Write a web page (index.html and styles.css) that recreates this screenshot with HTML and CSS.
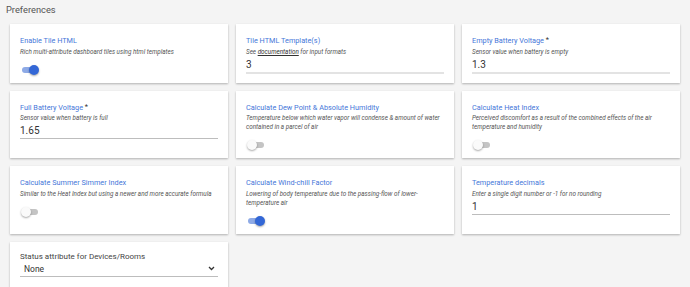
FILE: index.html
```html
<!DOCTYPE html>
<html lang="en">
<head>
    <meta charset="UTF-8">
    <title>Preferences</title>
    <link rel="stylesheet" href="styles.css">
</head>
<body>
    <h2 class="page-title">Preferences</h2>

    <div class="grid">
        <div class="card">
            <div class="label">Enable Tile HTML</div>
            <div class="desc">Rich multi-attribute dashboard tiles using html templates</div>
            <div class="switch on"><span class="track"></span><span class="knob"></span></div>
        </div>
        <div class="card">
            <div class="label">Tile HTML Template(s)</div>
            <div class="desc">See <a href="#">documentation</a> for input formats</div>
            <div class="field thick">3</div>
        </div>
        <div class="card">
            <div class="label">Empty Battery Voltage <span class="req">*</span></div>
            <div class="desc">Sensor value when battery is empty</div>
            <div class="field thick">1.3</div>
        </div>

        <div class="card">
            <div class="label">Full Battery Voltage <span class="req">*</span></div>
            <div class="desc">Sensor value when battery is full</div>
            <div class="field">1.65</div>
        </div>
        <div class="card">
            <div class="label">Calculate Dew Point &amp; Absolute Humidity</div>
            <div class="desc">Temperature below which water vapor will condense &amp; amount of water contained in a parcel of air</div>
            <div class="switch"><span class="track"></span><span class="knob"></span></div>
        </div>
        <div class="card">
            <div class="label">Calculate Heat Index</div>
            <div class="desc">Perceived discomfort as a result of the combined effects of the air temperature and humidity</div>
            <div class="switch"><span class="track"></span><span class="knob"></span></div>
        </div>

        <div class="card">
            <div class="label">Calculate Summer Simmer Index</div>
            <div class="desc">Similar to the Heat Index but using a newer and more accurate formula</div>
            <div class="switch"><span class="track"></span><span class="knob"></span></div>
        </div>
        <div class="card">
            <div class="label">Calculate Wind-chill Factor</div>
            <div class="desc">Lowering of body temperature due to the passing-flow of lower-temperature air</div>
            <div class="switch on"><span class="track"></span><span class="knob"></span></div>
        </div>
        <div class="card">
            <div class="label">Temperature decimals</div>
            <div class="desc">Enter a single digit number or -1 for no rounding</div>
            <div class="field">1</div>
        </div>

        <div class="card select-card">
            <div class="select-label">Status attribute for Devices/Rooms</div>
            <div class="select">
                <span>None</span>
                <svg width="7" height="5" viewBox="0 0 7 5"><path d="M1 1l2.5 2.5L6 1" fill="none" stroke="#333" stroke-width="1.3"/></svg>
            </div>
        </div>
    </div>
</body>
</html>
```

FILE: styles.css
```css
body {
    margin: 0;
    padding: 0;
    font-family: Roboto, "Liberation Sans", sans-serif;
    background: #f4f4f4;
    color: #333;
    overflow: hidden;
}
.page-title {
    margin: 0;
    padding: 3px 0 0 6px;
    font-size: 9.3px;
    font-weight: 400;
    color: #555;
    line-height: 14px;
}
.grid {
    display: grid;
    grid-template-columns: repeat(3, 218px);
    column-gap: 8px;
    row-gap: 8px;
    padding: 7px 10px 0 10px;
}
.card {
    background: #fff;
    box-shadow: 0 1px 2px rgba(0, 0, 0, 0.28);
    padding: 12px 10px 8px 10px;
}
.label {
    font-size: 7.3px;
    line-height: 9px;
    color: #4677d9;
}
.req {
    color: #333;
    font-size: 7.5px;
    position: relative;
    top: -1px;
}
.desc {
    font-size: 6.3px;
    line-height: 9px;
    font-style: italic;
    color: #555;
    margin-top: 2.5px;
}
.desc a {
    color: #333;
}
.switch {
    position: relative;
    width: 18px;
    height: 10px;
    margin-top: 8px;
    margin-left: 1px;
}
.switch .track {
    position: absolute;
    left: 1px;
    top: 2px;
    width: 16px;
    height: 6px;
    border-radius: 3px;
    background: #c4c4c4;
}
.switch .knob {
    position: absolute;
    left: 0;
    top: 0;
    width: 10px;
    height: 10px;
    border-radius: 50%;
    background: #fafafa;
    box-shadow: 0 1px 2px rgba(0, 0, 0, 0.35);
}
.switch.on .track {
    background: #8eaae6;
}
.switch.on .knob {
    left: 8px;
    background: #3367d6;
}
.field {
    font-size: 10px;
    line-height: 12px;
    color: #333;
    margin-top: 2px;
    padding-bottom: 1px;
    border-bottom: 1px solid #bdbdbd;
}
.field.thick {
    border-bottom: 2px solid #e3e3e3;
}
.select-card {
    padding-top: 10px;
    height: 60px;
}
.select-label {
    font-size: 8px;
    line-height: 10px;
    color: #444;
}
.select {
    display: flex;
    justify-content: space-between;
    align-items: center;
    font-size: 8.5px;
    line-height: 12px;
    margin-top: 1px;
    padding: 0 3px 1px 4px;
    border-bottom: 1px solid #bdbdbd;
}
```
